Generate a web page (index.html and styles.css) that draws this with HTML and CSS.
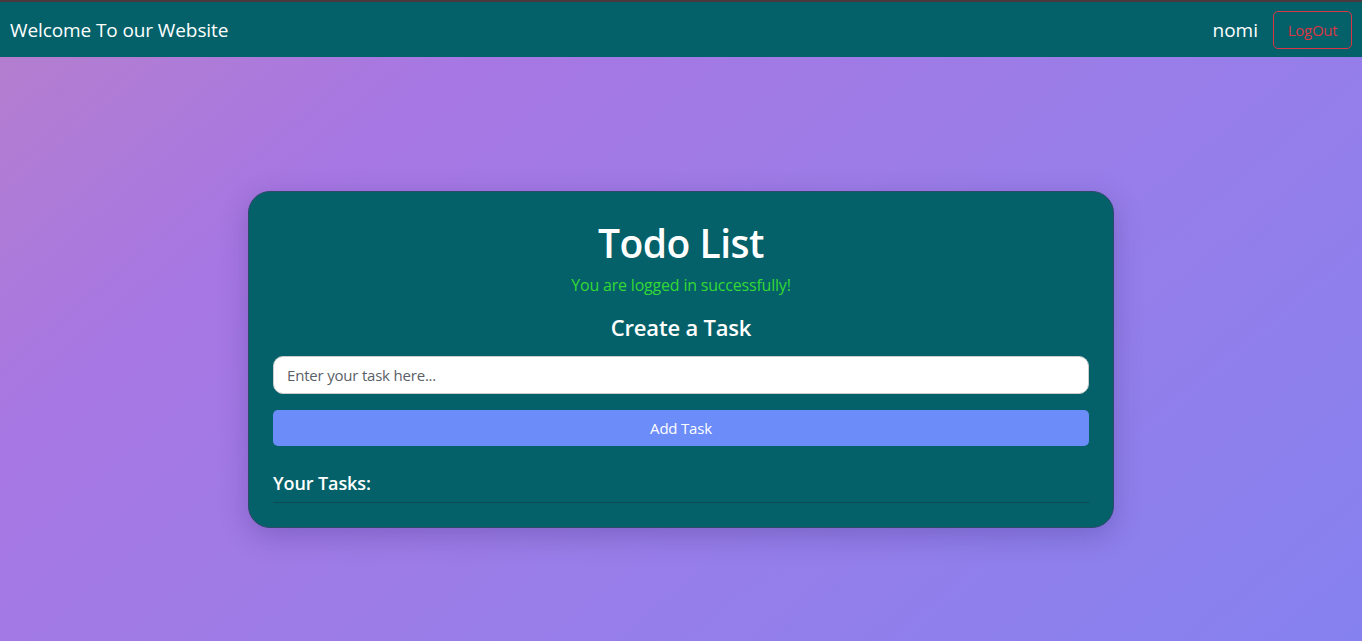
FILE: index.html
```html
<!DOCTYPE html>
<html lang="en">
<head>
<meta charset="utf-8">
<title>Todo List</title>
<link rel="stylesheet" href="styles.css">
</head>
<body>
<div class="topline"></div>
<nav class="navbar">
  <span class="brand">Welcome To our Website</span>
  <div class="nav-right">
    <span class="user">nomi</span>
    <button class="logout">LogOut</button>
  </div>
</nav>
<main class="main">
  <section class="card">
    <h1 class="title">Todo List</h1>
    <p class="success">You are logged in successfully!</p>
    <h2 class="subtitle">Create a Task</h2>
    <input class="task-input" type="text" placeholder="Enter your task here...">
    <button class="add-btn">Add Task</button>
    <h3 class="tasks-title">Your Tasks:</h3>
    <div class="divider"></div>
  </section>
</main>
</body>
</html>
```
FILE: styles.css
```css
* { box-sizing: border-box; }
html, body { margin: 0; padding: 0; height: 100%; }
body {
  font-family: "Open Sans", "Noto Sans", "Liberation Sans", sans-serif;
  background: linear-gradient(140deg, #b57fcc 0%, #a777e3 25%, #9b7de8 55%, #8581ef 100%);
  min-height: 641px;
  overflow: hidden;
}
.topline { height: 2px; background: #4a3a3f; }
.navbar {
  height: 55px;
  background: #046169;
  display: flex;
  align-items: center;
  justify-content: space-between;
  padding: 0 10px 0 10px;
}
.brand { color: #fff; font-size: 19px; letter-spacing: -0.1px; }
.nav-right { display: flex; align-items: center; gap: 15px; }
.user { color: #fff; font-size: 19px; }
.logout {
  font-family: inherit;
  background: transparent;
  border: 1px solid #dc3545;
  color: #dc3545;
  font-size: 15px;
  border-radius: 5px;
  height: 38px;
  width: 79px;
  padding: 0;
  letter-spacing: -0.3px;
}
.main {
  display: flex;
  justify-content: center;
  padding-top: 134px;
}
.card {
  width: 866px;
  background: #046169;
  border: 1px solid #2d4a6a;
  border-radius: 22px;
  box-shadow: 0 8px 28px rgba(60, 40, 120, 0.3);
  padding: 20px 24px 24px 24px;
  display: flex;
  flex-direction: column;
  align-items: stretch;
}
.title {
  margin: 4px 0 0;
  text-align: center;
  color: #fff;
  font-size: 39px;
  font-weight: 600;
  line-height: 54px;
  letter-spacing: -0.5px;
}
.success {
  margin: 4px 0 0;
  text-align: center;
  color: #33d933;
  font-size: 16px;
  line-height: 22px;
  letter-spacing: -0.2px;
}
.subtitle {
  margin: 15px 0 0;
  text-align: center;
  color: #fff;
  font-size: 22px;
  font-weight: 600;
  line-height: 32px;
  letter-spacing: -0.2px;
}
.task-input {
  margin-top: 13px;
  height: 38px;
  width: 100%;
  border: 1px solid #ccc;
  border-radius: 10px;
  padding: 0 13px;
  font-family: inherit;
  font-size: 15px;
  color: #333;
  background: #fff;
  outline: none;
}
.task-input::placeholder { color: #5a5f68; letter-spacing: -0.2px; }
.add-btn {
  margin-top: 16px;
  height: 36px;
  width: 100%;
  border: none;
  border-radius: 5px;
  background: #6c8cfa;
  color: #fff;
  font-family: inherit;
  font-size: 15px;
  letter-spacing: -0.2px;
}
.tasks-title {
  margin: 24px 0 0;
  color: #fff;
  font-size: 18px;
  font-weight: 600;
  line-height: 26px;
  letter-spacing: -0.1px;
}
.divider {
  margin-top: 6px;
  height: 1px;
  background: #0b4a50;
}
```
